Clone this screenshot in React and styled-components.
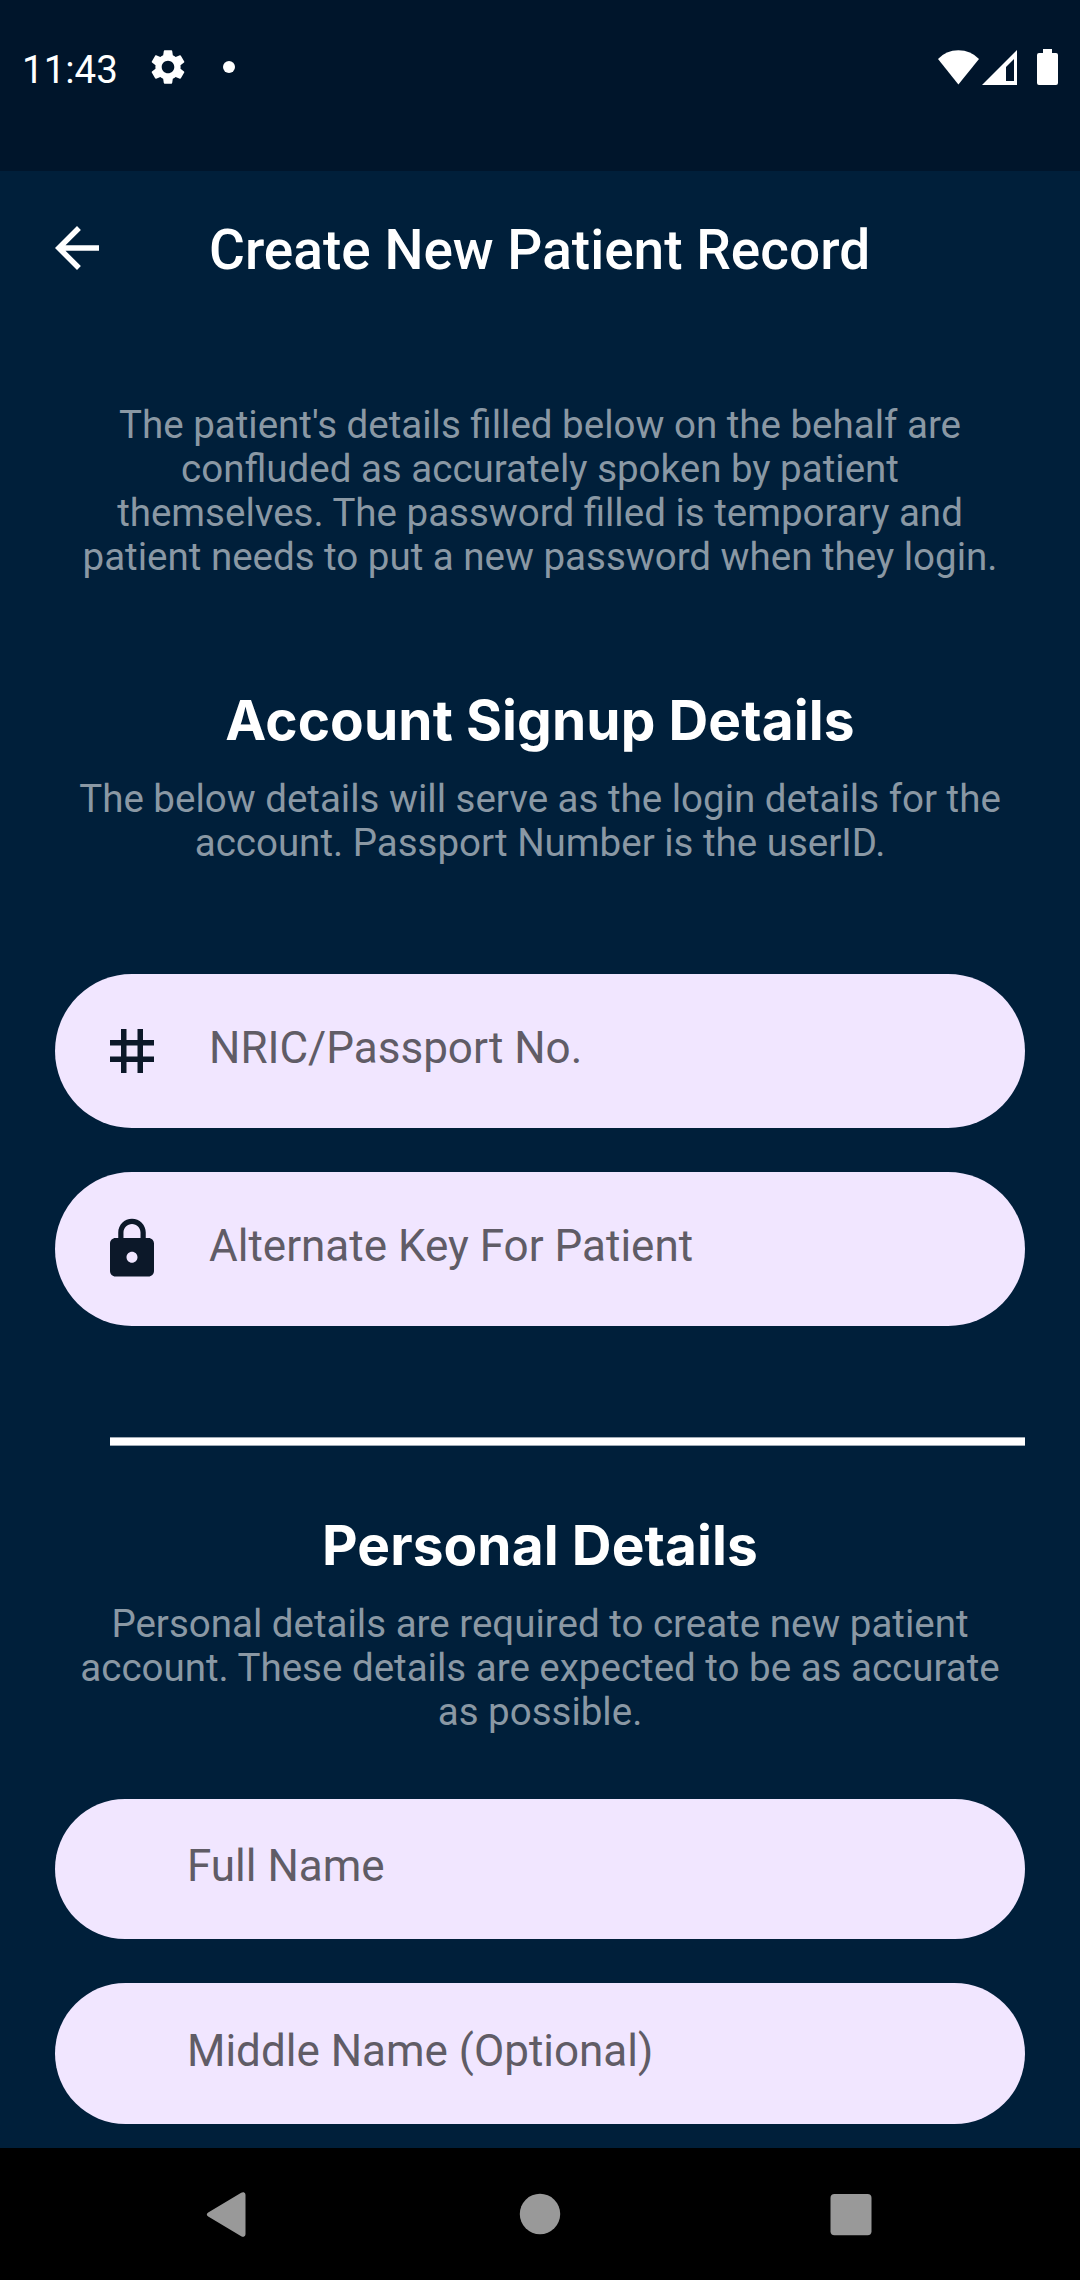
import React from "react";
import styled, { createGlobalStyle } from "styled-components";
import { MdSettings, MdArrowBack, MdTag, MdLock } from "react-icons/md";

const GlobalStyle = createGlobalStyle`
  * { box-sizing: border-box; }
  body { margin: 0; background: #001f3a; }
`;

const Screen = styled.div`
  display: flex;
  flex-direction: column;
  width: 1080px;
  height: 2280px;
  overflow: hidden;
  background: #001f3a;
  font-family: Roboto, "Liberation Sans", sans-serif;
  color: #fff;
`;

const StatusBar = styled.header`
  display: flex;
  align-items: center;
  justify-content: space-between;
  flex: none;
  height: 171px;
  padding: 0 22px 37px 22px;
  background: #00152b;
`;

const StatusGroup = styled.div`
  display: flex;
  align-items: center;
`;

const Clock = styled.span`
  width: 125px;
  padding-top: 6px;
  font-size: 38.5px;
  line-height: 44px;
`;

const GearIcon = styled(MdSettings)`
  width: 42px;
  height: 42px;
`;

const Dot = styled.span`
  width: 12px;
  height: 12px;
  margin-left: 34px;
  border-radius: 50%;
  background: #fff;
`;

const StatusGlyphs = styled.svg`
  width: 120px;
  height: 36px;
  fill: #fff;
`;

const AppBar = styled.nav`
  display: flex;
  align-items: center;
  flex: none;
  height: 154px;
  padding-left: 44px;
`;

const BackIcon = styled(MdArrowBack)`
  width: 66px;
  height: 66px;
`;

const Title = styled.h1`
  margin: 4px 0 0 99px;
  font-size: 55px;
  font-weight: 500;
  line-height: 64px;
  white-space: nowrap;
`;

const Form = styled.main`
  flex: 1;
  min-height: 0;
  padding: 78px 55px 0;
`;

const Heading = styled.h2`
  margin: ${(p) => p.$top}px 0 24px;
  font-family: Inter, sans-serif;
  font-size: 55px;
  font-weight: 700;
  line-height: 66px;
  letter-spacing: 0.1px;
  text-align: center;
`;

const Note = styled.p`
  margin: 0;
  color: #8a98a4;
  font-size: 38.5px;
  line-height: 44px;
  text-align: center;
  white-space: nowrap;
`;

const Fields = styled.div`
  display: flex;
  flex-direction: column;
  gap: ${(p) => p.$gap}px;
  margin-top: ${(p) => p.$top}px;
`;

const Field = styled.label`
  display: flex;
  align-items: center;
  height: ${(p) => p.$height}px;
  padding-left: ${(p) => p.$inset}px;
  border-radius: 80px;
  background: #f1e6ff;
  color: #0c1829;

  svg {
    width: 66px;
    height: 66px;
    margin-right: 44px;
  }
`;

const Hint = styled.span`
  padding-bottom: 6px;
  color: #605c66;
  font-size: 44px;
  line-height: 52px;
  white-space: nowrap;
`;

const Divider = styled.hr`
  height: 9px;
  margin: 111px 0 0 55px;
  border: solid rgba(255, 255, 255, 0.62);
  border-width: 1px 0;
  background: #fff;
  background-clip: padding-box;
`;

const NavBar = styled.footer`
  display: flex;
  align-items: center;
  justify-content: space-between;
  flex: none;
  height: 132px;
  padding: 0 205.5px;
  background: #000;

  svg {
    width: 48px;
    height: 48px;
    fill: #999;
  }
`;

export default function App() {
  return (
    <Screen>
      <GlobalStyle />
      <StatusBar>
        <StatusGroup>
          <Clock>11:43</Clock>
          <GearIcon />
          <Dot />
        </StatusGroup>
        <StatusGlyphs viewBox="938 49 120 36">
          <path d="M938 59Q946 50.200 958.400 50.200T979 59L958.400 84.500Z" />
          <path
            fillRule="evenodd"
            d="M1017 50V85H982ZM1014 59L1006 67V81H1014Z"
          />
          <path d="M1043 49H1052V53H1056Q1058 53 1058 55V83Q1058 85 1056 85H1039Q1037 85 1037 83V55Q1037 53 1039 53H1043Z" />
        </StatusGlyphs>
      </StatusBar>

      <AppBar>
        <BackIcon />
        <Title>Create New Patient Record</Title>
      </AppBar>

      <Form>
        <Note>
          The patient's details filled below on the behalf are
          <br />
          confluded as accurately spoken by patient
          <br />
          themselves. The password filled is temporary and
          <br />
          patient needs to put a new password when they login.
        </Note>

        <Heading $top={108}>Account Signup Details</Heading>
        <Note>
          The below details will serve as the login details for the
          <br />
          account. Passport Number is the userID.
        </Note>
        <Fields $top={109} $gap={44}>
          <Field $height={154} $inset={44}>
            <MdTag />
            <Hint>NRIC/Passport No.</Hint>
          </Field>
          <Field $height={154} $inset={44}>
            <MdLock />
            <Hint>Alternate Key For Patient</Hint>
          </Field>
        </Fields>

        <Divider />

        <Heading $top={66}>Personal Details</Heading>
        <Note>
          Personal details are required to create new patient
          <br />
          account. These details are expected to be as accurate
          <br />
          as possible.
        </Note>
        <Fields $top={65} $gap={44.2}>
          <Field $height={140.3} $inset={132}>
            <Hint>Full Name</Hint>
          </Field>
          <Field $height={140.3} $inset={132}>
            <Hint>Middle Name (Optional)</Hint>
          </Field>
        </Fields>
      </Form>

      <NavBar>
        <svg viewBox="0 0 48 48">
          <path d="M35.200 2.800Q36.300 2 37.800 2.300Q39.500 2.900 39.500 4.800V44.200Q39.500 46.100 37.800 46.700Q36.300 47 35.200 46.200L2.200 26.600Q0.800 25.700 0.800 24.500Q0.800 23.300 2.200 22.400Z" />
        </svg>
        <svg viewBox="0 0 48 48">
          <circle cx="24" cy="24" r="20.200" />
        </svg>
        <svg viewBox="0 0 48 48">
          <rect x="3.500" y="4" width="41" height="41.300" rx="4" />
        </svg>
      </NavBar>
    </Screen>
  );
}
